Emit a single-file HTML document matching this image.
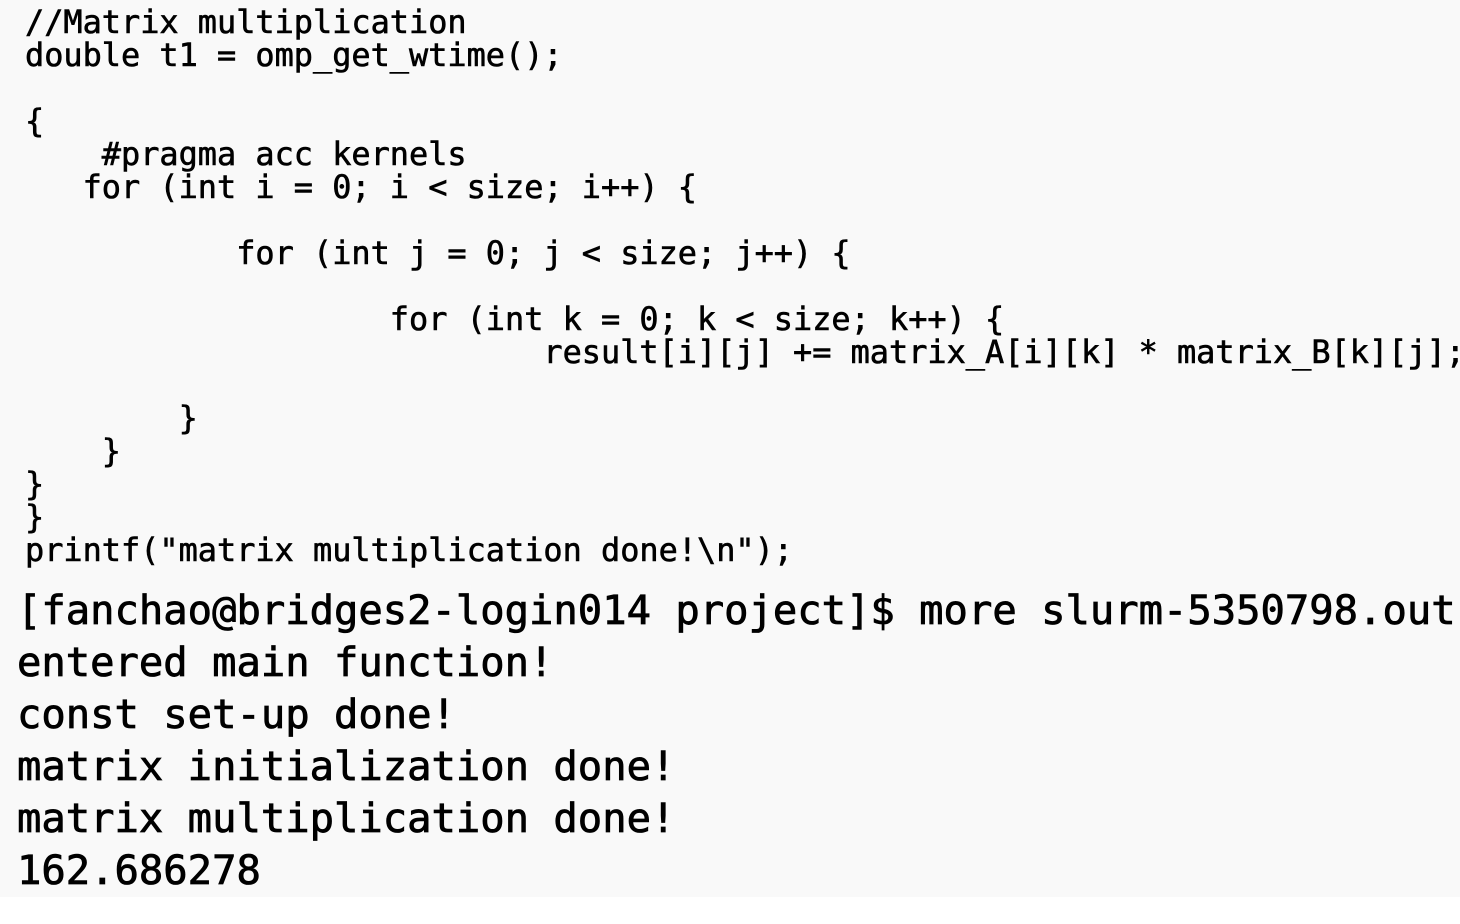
<!DOCTYPE html>
<html><head><meta charset="utf-8"><style>
html,body{margin:0;padding:0;width:1460px;height:924px;overflow:hidden;background:#fff;}
.bg{position:absolute;left:0;top:0;width:1460px;height:897px;background:#f9f9f9;}
pre{margin:0;position:absolute;white-space:pre;color:#000;}
.code{left:25px;top:6px;font-family:"DejaVu Sans Mono","Liberation Mono",monospace;font-size:31.9px;line-height:33px;-webkit-text-stroke:0.6px #000;}
.term{left:17px;top:584px;font-family:"DejaVu Sans Mono","Liberation Mono",monospace;font-size:40.5px;line-height:52px;-webkit-text-stroke:0.8px #000;}
</style></head><body>
<div class="bg"></div>
<pre class="code">//Matrix multiplication
double t1 = omp_get_wtime();

{
    #pragma acc kernels
   for (int i = 0; i &lt; size; i++) {

           for (int j = 0; j &lt; size; j++) {

                   for (int k = 0; k &lt; size; k++) {
                           result[i][j] += matrix_A[i][k] * matrix_B[k][j];

        }
    }
}
}
printf("matrix multiplication done!\n");</pre>
<pre class="term">[fanchao@bridges2-login014 project]$ more slurm-5350798.out
entered main function!
const set-up done!
matrix initialization done!
matrix multiplication done!
162.686278</pre>
</body></html>
